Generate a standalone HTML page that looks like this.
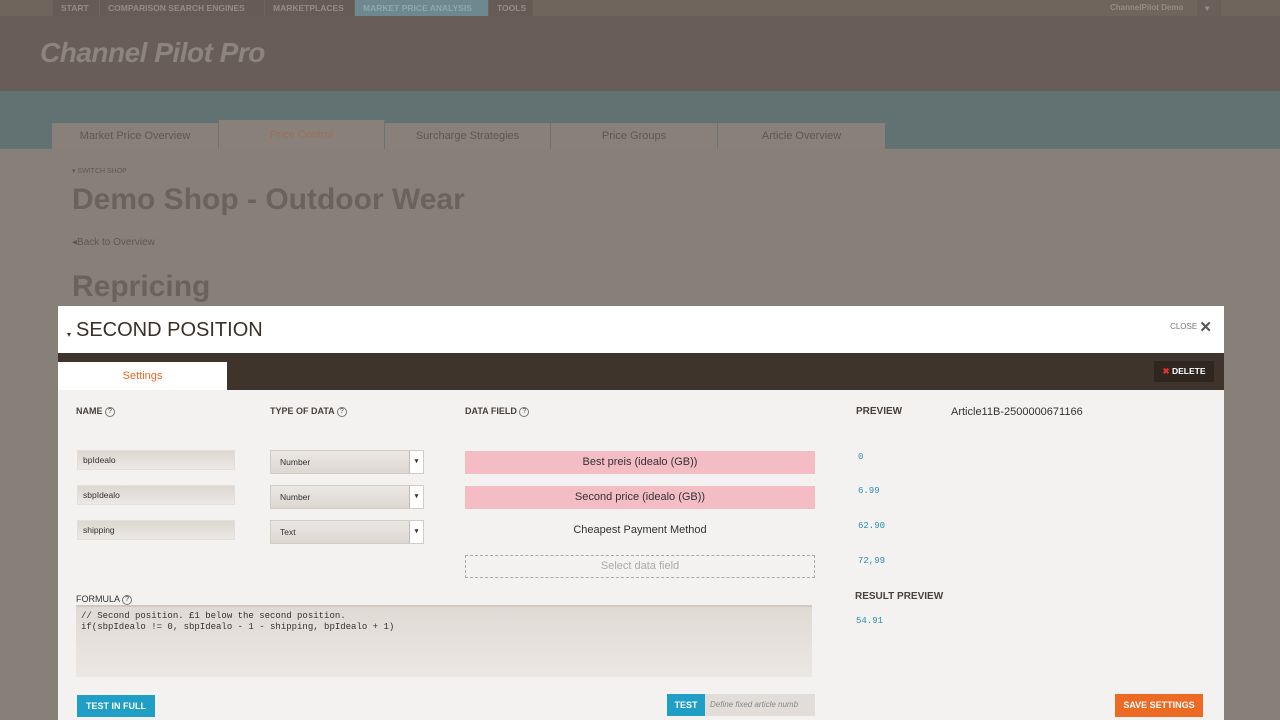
<!DOCTYPE html>
<html><head><meta charset="utf-8"><style>
*{box-sizing:border-box;margin:0;padding:0}
body{width:1280px;height:720px;overflow:hidden;background:#878079;font-family:"Liberation Sans",sans-serif;position:relative}
.a{position:absolute}
.nav{top:0;left:0;width:1280px;height:16px;background:#6f655d}
.nav span{position:absolute;top:0;height:16px;line-height:16px;font-size:8.5px;font-weight:bold;color:#958c84;padding:0 8px}
.hdr{top:16px;left:0;width:1280px;height:75px;background:#685e57}
.teal{top:91px;left:0;width:1280px;height:58px;background:#627172}
.tab{position:absolute;top:123px;height:26px;background:#888079;color:#5f5751;font-size:11px;text-align:center;line-height:27px;border-right:1px solid #6e7272}
.modal{top:306px;left:58px;width:1166px;height:414px;background:#f3f2f0}
.mh{top:0;left:0;width:1166px;height:47px;background:#fff}
.mb{top:47px;left:0;width:1166px;height:37px;background:#3f342b}
.lbl{font-size:9px;font-weight:bold;color:#4a413b}
.q{display:inline-block;width:10px;height:10px;border:1px solid #777;border-radius:50%;font-size:7px;line-height:8px;text-align:center;font-weight:normal;vertical-align:middle}
.in{height:20px;width:158px;background:linear-gradient(#ddd7d1,#ece8e4);border:1px solid #e4dfda;font-size:8.5px;color:#333;line-height:19px;padding-left:5px}
.sel{height:24px;width:154px;background:linear-gradient(#ebe7e3,#ddd7d1);border:1px solid #d2ccc6;font-size:8.5px;color:#333;line-height:22px;padding-left:9px}
.sel b{position:absolute;right:0;top:0;width:14px;height:22px;background:#fff;border-left:1px solid #bbb;font-size:7px;text-align:center;line-height:22px}
.pink{height:23px;width:350px;background:#f4bcc4;font-size:11px;color:#333;text-align:center;line-height:23px}
.num{font-family:"Liberation Mono",monospace;font-size:9px;color:#2a8fb0}
</style></head><body>
<div class="a nav">
<span style="left:53px;width:46px;background:#665c55">START</span>
<span style="left:100px;width:164px;background:#665c55">COMPARISON SEARCH ENGINES</span>
<span style="left:265px;width:89px;background:#665c55">MARKETPLACES</span>
<span style="left:355px;background:#6e8890;color:#8fa6ae;width:133px">MARKET PRICE ANALYSIS</span>
<span style="left:489px;width:44px;background:#665c55">TOOLS</span>
<span style="left:1102px;font-size:8px">ChannelPilot Demo</span>
<span style="left:1197px;width:24px;background:#6a6059">▾</span>
</div>
<div class="a hdr"><div class="a" style="left:40px;top:21px;font-size:28px;font-weight:bold;font-style:italic;color:#8d847d;letter-spacing:-0.5px">Channel Pilot Pro</div></div>
<div class="a teal"></div>
<div class="tab" style="left:52px;width:167px">Market Price Overview</div>
<div class="tab" style="left:219px;width:166px;top:120px;height:29px;color:#9a6f5c;line-height:30px">Price Control</div>
<div class="tab" style="left:385px;width:166px">Surcharge Strategies</div>
<div class="tab" style="left:551px;width:167px">Price Groups</div>
<div class="tab" style="left:718px;width:167px;border:none">Article Overview</div>
<div class="a" style="left:72px;top:167px;font-size:7px;color:#5f5751">▾ SWITCH SHOP</div>
<div class="a" style="left:72px;top:183px;font-size:30px;font-weight:bold;color:#6b625b">Demo Shop - Outdoor Wear</div>
<div class="a" style="left:72px;top:237px;font-size:10px;color:#5f5751">◂Back to Overview</div>
<div class="a" style="left:72px;top:270px;font-size:30px;font-weight:bold;color:#6b625b">Repricing</div>

<div class="a modal">
<div class="a mh">
<div class="a" style="left:9px;top:24px;font-size:8px;color:#3a302a">▾</div>
<div class="a" style="left:18px;top:13px;font-size:20px;color:#3a302a">SECOND POSITION</div>
<div class="a" style="right:12px;top:12px;font-size:8px;color:#777">CLOSE <span style="font-size:15px;font-weight:bold;color:#555;vertical-align:middle">✕</span></div>
</div>
<div class="a mb">
<div class="a" style="left:0;top:9px;width:169px;height:28px;background:#fff;color:#e86a26;font-size:11px;text-align:center;line-height:28px">Settings</div>
<div class="a" style="right:10px;top:8px;width:60px;height:21px;background:#2f2620;color:#fff;font-size:8.5px;font-weight:bold;line-height:21px;text-align:center"><span style="color:#e63030">✖</span> DELETE</div>
</div>
<div class="a lbl" style="left:18px;top:100px">NAME <span class="q">?</span></div>
<div class="a lbl" style="left:212px;top:100px">TYPE OF DATA <span class="q">?</span></div>
<div class="a lbl" style="left:407px;top:100px">DATA FIELD <span class="q">?</span></div>
<div class="a lbl" style="left:798px;top:100px;font-size:10px">PREVIEW</div>
<div class="a" style="left:893px;top:100px;font-size:11px;color:#333">Article11B-2500000671166</div>
<div class="a in" style="left:19px;top:144px">bpIdealo</div>
<div class="a in" style="left:19px;top:179px">sbpIdealo</div>
<div class="a in" style="left:19px;top:214px">shipping</div>
<div class="a sel" style="left:212px;top:144px">Number<b>▾</b></div>
<div class="a sel" style="left:212px;top:179px">Number<b>▾</b></div>
<div class="a sel" style="left:212px;top:214px">Text<b>▾</b></div>
<div class="a pink" style="left:407px;top:145px">Best preis (idealo (GB))</div>
<div class="a pink" style="left:407px;top:180px">Second price (idealo (GB))</div>
<div class="a" style="left:407px;top:218px;width:350px;text-align:center;font-size:11px;color:#333">Cheapest Payment Method</div>
<div class="a" style="left:407px;top:249px;width:350px;height:23px;border:1px dashed #aaa;text-align:center;line-height:21px;font-size:11px;color:#aaa">Select data field</div>
<div class="a num" style="left:800px;top:146px">0</div>
<div class="a num" style="left:800px;top:180px">6.99</div>
<div class="a num" style="left:800px;top:215px">62.90</div>
<div class="a num" style="left:800px;top:250px">72,99</div>
<div class="a lbl" style="left:797px;top:285px;font-size:10px">RESULT PREVIEW</div>
<div class="a num" style="left:798px;top:310px">54.91</div>
<div class="a lbl" style="left:18px;top:288px;font-weight:normal;color:#333">FORMULA <span class="q">?</span></div>
<div class="a" style="left:18px;top:299px;width:736px;height:72px;background:linear-gradient(#e0dad4,#ebe7e3);border-top:2px solid #d0c8c0;font-family:'Liberation Mono',monospace;font-size:9px;color:#333;padding:4px 5px;line-height:11px;white-space:pre">// Second position. £1 below the second position.
if(sbpIdealo != 0, sbpIdealo - 1 - shipping, bpIdealo + 1)</div>
<div class="a" style="left:19px;top:389px;width:78px;height:22px;background:#1f9ec6;color:#fff;font-size:9px;font-weight:bold;text-align:center;line-height:22px">TEST IN FULL</div>
<div class="a" style="left:609px;top:388px;width:38px;height:22px;background:#1f9ec6;color:#fff;font-size:9px;font-weight:bold;text-align:center;line-height:22px">TEST</div>
<div class="a" style="left:647px;top:388px;width:110px;height:22px;background:#e2ddd8;color:#888;font-size:8px;font-style:italic;line-height:22px;padding-left:5px;overflow:hidden;white-space:nowrap">Define fixed article numb</div>
<div class="a" style="left:1057px;top:388px;width:88px;height:23px;background:#ec6a24;color:#fff;font-size:9px;font-weight:bold;text-align:center;line-height:23px">SAVE SETTINGS</div>
</div>
</body></html>
